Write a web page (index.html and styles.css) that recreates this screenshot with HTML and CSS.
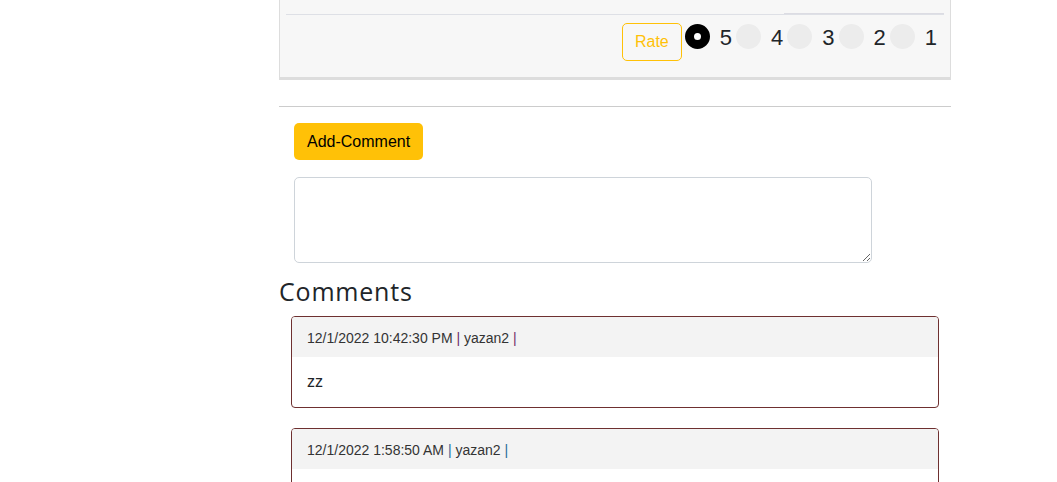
FILE: index.html
```html
<!DOCTYPE html>
<html lang="en">
<head>
<meta charset="utf-8">
<title>Comments</title>
<link rel="stylesheet" href="styles.css">
</head>
<body>
<div class="page">
  <div class="panel">
    <div class="top-space"><div class="seg"></div></div>
    <div class="divider"></div>
    <div class="rate-row">
      <button class="rate-btn" type="button">Rate</button>
      <span class="radio checked"></span><span class="num">5</span>
      <span class="radio"></span><span class="num">4</span>
      <span class="radio"></span><span class="num">3</span>
      <span class="radio"></span><span class="num">2</span>
      <span class="radio"></span><span class="num">1</span>
    </div>
  </div>
  <hr class="sep">
  <div class="comment-form">
    <button class="add-btn" type="button">Add-Comment</button>
    <textarea class="comment-input"></textarea>
  </div>
  <h3 class="comments-title">Comments</h3>
  <div class="comment">
    <div class="comment-head">12/1/2022 10:42:30 PM <span class="pipe pipe-a">|</span> yazan2 <span class="pipe pipe-a">|</span></div>
    <div class="comment-body">zz</div>
  </div>
  <div class="comment">
    <div class="comment-head">12/1/2022 1:58:50 AM <span class="pipe pipe-b">|</span> yazan2 <span class="pipe pipe-b">|</span></div>
    <div class="comment-body empty"></div>
  </div>
</div>
</body>
</html>
```
FILE: styles.css
```css
html, body {
  margin: 0;
  padding: 0;
  background: #fff;
  font-family: "Liberation Sans", Arial, sans-serif;
  color: #212529;
}

.page {
  margin-left: 279px;
  width: 672px;
}

.panel {
  background: #f7f7f7;
  border-left: 1px solid #dddddd;
  border-right: 1px solid #dddddd;
  border-bottom: 3px solid #dddddd;
  padding: 0 6px;
}

.top-space {
  height: 14px;
  display: flex;
  justify-content: flex-end;
  align-items: flex-end;
}

.seg {
  width: 160px;
  height: 1px;
  background: #dcdce3;
}

.divider {
  height: 1px;
  background: #dee0e6;
}

.rate-row {
  height: 62px;
  display: flex;
  justify-content: flex-end;
  align-items: flex-start;
  padding-right: 3px;
}

.rate-btn {
  margin: 8px 3px 0 0;
  height: 38px;
  padding: 6px 12px;
  border: 1px solid #ffc107;
  border-radius: 5px;
  background: transparent;
  color: #ffc107;
  font-family: "Liberation Sans", Arial, sans-serif;
  font-size: 16px;
  line-height: 24px;
}

.radio {
  box-sizing: border-box;
  width: 25px;
  height: 25px;
  margin-top: 9px;
  border-radius: 50%;
  background: #ececec;
  flex: none;
}

.radio.checked {
  background: #fff;
  border: 9px solid #000;
}

.num {
  margin: 10px 4px 0 10px;
  font-size: 22px;
  line-height: 25px;
  color: #212529;
}

.sep {
  margin: 26px 0 0;
  border: 0;
  border-top: 1px solid #cccccc;
  height: 0;
}

.comment-form {
  padding-left: 15px;
  padding-top: 16px;
}

.add-btn {
  display: block;
  padding: 6px 13px;
  border: 0;
  border-radius: 5px;
  background: #ffc107;
  color: #000;
  font-family: "Liberation Sans", Arial, sans-serif;
  font-size: 16px;
  line-height: 25px;
}

.comment-input {
  display: block;
  box-sizing: border-box;
  width: 578px;
  height: 86px;
  margin-top: 17px;
  border: 1px solid #ced4da;
  border-radius: 5px;
  background: #fff;
}

.comments-title {
  margin: 13px 0 10px;
  font-family: "Open Sans", sans-serif;
  font-weight: 400;
  font-size: 25px;
  line-height: 30px;
  letter-spacing: 0.8px;
  color: #212529;
}

.comment {
  margin: 0 12px 20px;
  border: 1px solid #6e3030;
  border-radius: 4px;
  overflow: hidden;
}

.comment-head {
  background: #f3f3f3;
  padding: 11px 15px 9px;
  font-size: 14px;
  line-height: 20px;
  color: #333;
}

.pipe-a {
  color: #6f2c6b;
}

.pipe-b {
  color: #2b6a99;
}

.comment-body {
  padding: 13px 15px;
  font-size: 16px;
  line-height: 24px;
  color: #212529;
}

.comment-body.empty {
  height: 24px;
}
```
